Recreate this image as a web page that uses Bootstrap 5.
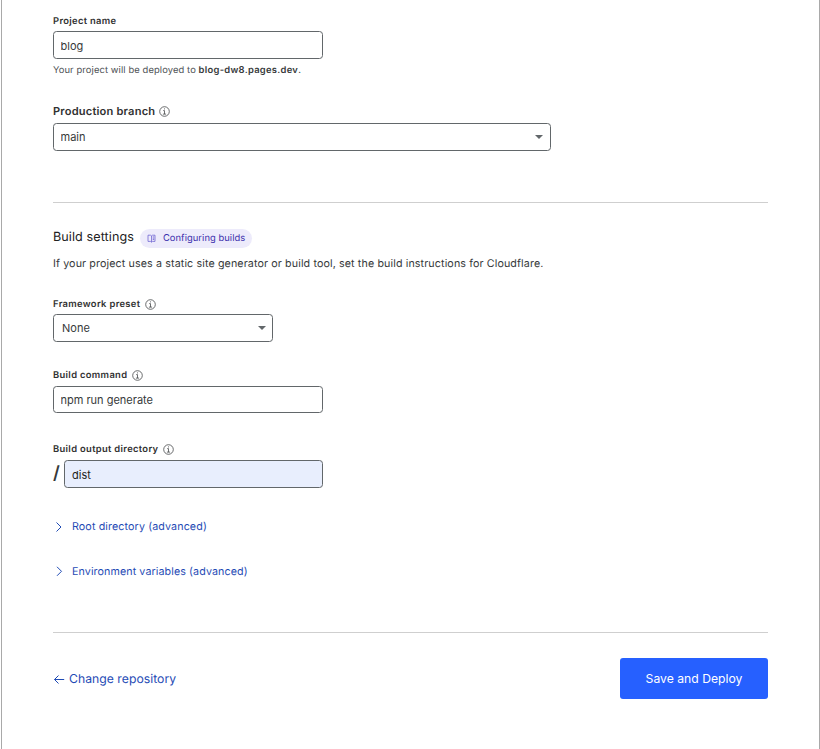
<!DOCTYPE html>
<html lang="en">
<head>
<meta charset="utf-8">
<meta name="viewport" content="width=device-width, initial-scale=1">
<title>Set up builds and deployments</title>
<link href="https://cdn.jsdelivr.net/npm/bootstrap@5.3.0/dist/css/bootstrap.min.css" rel="stylesheet">
<style>
body{font-family:Inter,"Liberation Sans",sans-serif;font-size:10.7px;letter-spacing:.12px;color:#36393a;background:#fff;overflow:hidden;text-rendering:geometricPrecision}
.panel{height:749px;border-left:1px solid #a9a9a9;border-right:1px solid #a9a9a9;margin-left:1px;padding:14px 51px 0}
.field-label{display:flex;align-items:center;height:14px;margin:0 0 3px;padding-top:2px;gap:4.500px;font-size:9.4px;font-weight:600;letter-spacing:.33px;line-height:14px;color:#313131}
.info{width:11px;height:11px;margin-top:-2px;flex:none;fill:none;stroke:#45484a;stroke-width:.8}
.field-label-lg{font-size:11.1px;letter-spacing:.19px;gap:4px;margin:27px 0 5px;padding-top:0}
.field-label-lg .info{margin-top:0}
.form-control,.form-select{width:270px;height:28px;min-height:0;padding:1px 7px 0 6.500px;font-size:11px;letter-spacing:0;line-height:24px;color:#36393a;border:1px solid #62676a;border-radius:3.500px}
.form-select{background-image:url("data:image/svg+xml,%3Csvg xmlns='http://www.w3.org/2000/svg' viewBox='0 0 8 4'%3E%3Cpath d='M0 0h8L4 4z' fill='%2362676a'/%3E%3C/svg%3E");background-size:8px 4px;background-position:right 7px center;padding-top:0}
.preset-field{margin-top:25px}
.command-field{margin-top:26px}
.output-field{margin-top:29px}
.command-field .field-label,.output-field .field-label{margin-bottom:4px}
.command-field .form-control{height:27px}
.branch{width:498px}
.preset{width:220px;padding-left:8px;background-position:right 6px center}
.output-field .form-control{width:259px;background:#e8eefd;color:#1d1f20;padding-left:7px}
.help{height:14px;line-height:16px;margin-top:4px;font-size:9.4px;letter-spacing:.1px;color:#4e5255}
.help strong{font-weight:600;letter-spacing:.29px;color:#36393a}
.rule{height:1px;background:#cfcfcf}
.branch-rule{margin-top:51px}
.build{margin-top:26px}
.heading{font-size:12.6px;font-weight:400;letter-spacing:.08px;line-height:18px;margin:0;color:#222}
.docs{height:19px;margin-left:6px;padding:0 7px;gap:7px;border-radius:10px;background:#edebfb;color:#3c2fad;font-size:9.4px;letter-spacing:.05px;line-height:19px;text-decoration:none}
.docs .line-icon{stroke:#6a5fd0}
.intro{line-height:16px;margin:8px 0 0}
.slash{width:11px;font-size:18px;font-weight:600;line-height:27px;letter-spacing:0;color:#36393a}
.toggle,.back{color:#1f4bb5;text-decoration:none}
.toggle{height:16px;line-height:16px;margin-top:31px}
.toggle + .toggle{margin-top:29px;letter-spacing:.1px}
.actions-rule{margin-top:52px}
.actions{margin-top:25px}
.back{padding-top:2px;font-size:12.2px;letter-spacing:.03px}
.line-icon{fill:none;stroke:currentColor;flex:none}
.deploy{width:148px;height:41px;padding:2px 0 0;border:0;border-radius:3px;background:#2660ff;color:#fff;font-size:12.2px;letter-spacing:0}
</style>
</head>
<body>
<svg class="d-none">
<symbol id="info" viewBox="0 0 11 11"><circle cx="5.5" cy="5.5" r="4.8"/><path d="M4.200 4.600h1.300v3.500M3.900 8.100h3.200M5 2.900h1"/></symbol>
</svg>
<main class="panel">
<form>
<section>
<label class="field-label" for="name">Project name</label>
<input class="form-control" id="name" value="blog">
<div class="help">Your project will be deployed to <strong>blog-dw8.pages.dev</strong>.</div>
<label class="field-label field-label-lg" for="branch">Production branch <svg class="info"><use href="#info"/></svg></label>
<select class="form-select branch" id="branch"><option>main</option></select>
</section>
<div class="rule branch-rule"></div>
<section class="build">
<div class="d-flex align-items-start">
<h2 class="heading">Build settings</h2>
<a class="docs d-flex align-items-center" href="#"><svg class="line-icon" width="9" height="9" viewBox="0 0 9 9" stroke-width=".75"><path d="M1 1.200h2.500l1 .7v6.200l-1-.7H1zM4.500 1.900l1-.7H8v6.200H5.500l-1 .7M5.700 2.900h1.500M5.700 4.200h1.500M5.700 5.500h1.500"/></svg>Configuring builds</a>
</div>
<p class="intro">If your project uses a static site generator or build tool, set the build instructions for Cloudflare.</p>
<div class="preset-field">
<label class="field-label" for="preset">Framework preset <svg class="info"><use href="#info"/></svg></label>
<select class="form-select preset" id="preset"><option>None</option></select>
</div>
<div class="command-field">
<label class="field-label" for="command">Build command <svg class="info"><use href="#info"/></svg></label>
<input class="form-control" id="command" value="npm run generate">
</div>
<div class="output-field">
<label class="field-label" for="output">Build output directory <svg class="info"><use href="#info"/></svg></label>
<div class="d-flex"><span class="slash">/</span><input class="form-control" id="output" value="dist"></div>
</div>
<a class="toggle d-flex align-items-center" href="#"><svg class="line-icon" width="19" height="12" viewBox="0 0 19 12"><path d="M3.500 1.500 8 6l-4.500 4.500"/></svg>Root directory (advanced)</a>
<a class="toggle d-flex align-items-center" href="#"><svg class="line-icon" width="19" height="12" viewBox="0 0 19 12"><path d="M4 .8 8.500 5.300 4 9.800"/></svg>Environment variables (advanced)</a>
</section>
<div class="rule actions-rule"></div>
<div class="actions d-flex align-items-center justify-content-between">
<a class="back d-flex align-items-center" href="#"><svg class="line-icon" width="16" height="12" viewBox="0 0 16 12"><path d="M11.200 6.500H1.500M5.500 2.500l-4 4 4 4"/></svg>Change repository</a>
<button class="btn btn-primary deploy" type="button">Save and Deploy</button>
</div>
</form>
</main>
<script src="https://cdn.jsdelivr.net/npm/bootstrap@5.3.0/dist/js/bootstrap.bundle.min.js"></script>
</body>
</html>
